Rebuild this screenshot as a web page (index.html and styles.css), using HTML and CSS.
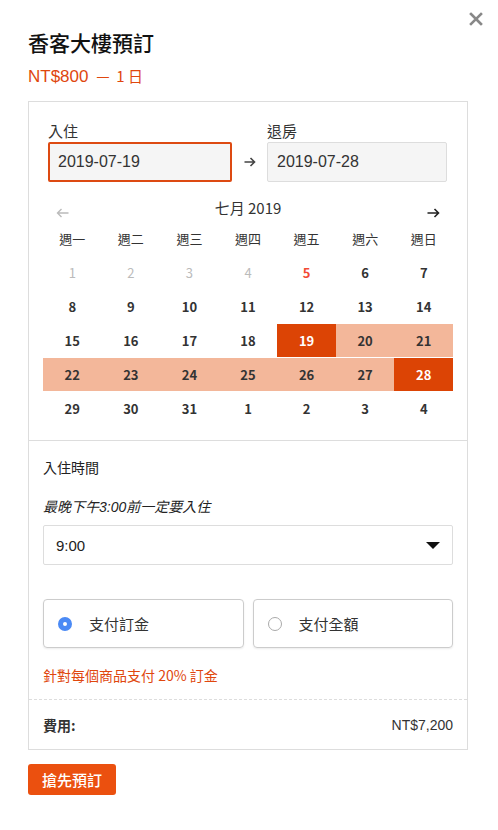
FILE: index.html
```html
<!DOCTYPE html>
<html>
    <head>
        <meta charset="utf-8">
        <title>香客大樓預訂</title>
        <link rel="stylesheet" href="styles.css">
    </head>
    <body>
        <div class="modal">
            <button class="close" aria-label="close">
                <svg width="14" height="14" viewBox="0 0 14 14"><path d="M2 2 L12 12 M12 2 L2 12" stroke="#888" stroke-width="2.6" stroke-linecap="square"/></svg>
            </button>
            <h2 class="title">香客大樓預訂</h2>
            <div class="price">NT$800 <span class="unit">— &nbsp;1 日</span></div>

            <div class="card">
                <div class="dates">
                    <div class="date-field">
                        <label>入住</label>
                        <div class="date-input active">2019-07-19</div>
                    </div>
                    <div class="date-arrow">
                        <svg width="12" height="10" viewBox="0 0 12 10"><path d="M0.5 5 H10.5 M6.5 1 L10.5 5 L6.5 9" fill="none" stroke="#444" stroke-width="1.6"/></svg>
                    </div>
                    <div class="date-field second">
                        <label>退房</label>
                        <div class="date-input">2019-07-28</div>
                    </div>
                </div>

                <div class="calendar">
                    <div class="month-nav">
                        <span class="nav prev"><svg width="13" height="10" viewBox="0 0 13 10"><path d="M12.5 5 H1.5 M5.5 1 L1.5 5 L5.5 9" fill="none" stroke="#bbb" stroke-width="1.4"/></svg></span>
                        <span class="month">七月 2019</span>
                        <span class="nav next"><svg width="13" height="10" viewBox="0 0 13 10"><path d="M0.5 5 H11.5 M7.5 1 L11.5 5 L7.5 9" fill="none" stroke="#222" stroke-width="1.6"/></svg></span>
                    </div>
                    <div class="days">
                        <div class="wd">週一</div>
                        <div class="wd">週二</div>
                        <div class="wd">週三</div>
                        <div class="wd">週四</div>
                        <div class="wd">週五</div>
                        <div class="wd">週六</div>
                        <div class="wd">週日</div>

                        <div class="day past">1</div>
                        <div class="day past">2</div>
                        <div class="day past">3</div>
                        <div class="day past">4</div>
                        <div class="day today">5</div>
                        <div class="day">6</div>
                        <div class="day">7</div>

                        <div class="day">8</div>
                        <div class="day">9</div>
                        <div class="day">10</div>
                        <div class="day">11</div>
                        <div class="day">12</div>
                        <div class="day">13</div>
                        <div class="day">14</div>

                        <div class="day">15</div>
                        <div class="day">16</div>
                        <div class="day">17</div>
                        <div class="day">18</div>
                        <div class="day selected">19</div>
                        <div class="day range">20</div>
                        <div class="day range">21</div>

                        <div class="day range">22</div>
                        <div class="day range">23</div>
                        <div class="day range">24</div>
                        <div class="day range">25</div>
                        <div class="day range">26</div>
                        <div class="day range">27</div>
                        <div class="day selected">28</div>

                        <div class="day">29</div>
                        <div class="day">30</div>
                        <div class="day">31</div>
                        <div class="day">1</div>
                        <div class="day">2</div>
                        <div class="day">3</div>
                        <div class="day">4</div>
                    </div>
                </div>

                <div class="checkin">
                    <h4>入住時間</h4>
                    <p class="note">最晚下午3:00前一定要入住</p>
                    <div class="select">
                        <span>9:00</span>
                        <span class="caret"></span>
                    </div>

                    <div class="pay-options">
                        <div class="pay-option">
                            <span class="radio checked"></span>
                            <span>支付訂金</span>
                        </div>
                        <div class="pay-option">
                            <span class="radio"></span>
                            <span>支付全額</span>
                        </div>
                    </div>
                    <p class="deposit">針對每個商品支付 20% 訂金</p>
                </div>

                <div class="total">
                    <span class="total-label">費用:</span>
                    <span class="total-value">NT$7,200</span>
                </div>
            </div>

            <button class="book">搶先預訂</button>
        </div>
    </body>
</html>
```

FILE: styles.css
```css
body {
    margin: 0;
    font-family: "Liberation Sans", "Noto Sans CJK TC", sans-serif;
    color: #222;
    background: #fff;
}

.modal {
    position: relative;
    padding: 26px 30px 0 28px;
    width: 440px;
}

.close {
    position: absolute;
    top: 12px;
    right: 15px;
    border: none;
    background: none;
    padding: 0;
    cursor: pointer;
}

.title {
    margin: 0;
    font-family: "Noto Sans CJK TC", sans-serif;
    font-size: 21px;
    font-weight: 500;
    line-height: 32px;
    color: #111;
}

.price {
    margin-top: 7px;
    font-size: 17px;
    line-height: 22px;
    color: #e0470e;
}

.price .unit {
    font-family: "Noto Sans CJK TC", sans-serif;
    font-size: 15px;
    margin-left: 3px;
}

.card {
    margin-top: 13px;
    border: 1px solid #ddd;
}

/* date inputs */
.dates {
    display: flex;
    align-items: flex-end;
    padding: 18px 20px 0 19px;
}

.date-field {
    width: 184px;
}

.date-field.second {
    width: 180px;
}

.date-field label {
    display: block;
    font-family: "Noto Sans CJK TC", sans-serif;
    font-size: 15px;
    line-height: 22px;
    color: #333;
}

.date-input {
    box-sizing: border-box;
    height: 40px;
    line-height: 38px;
    padding-left: 9px;
    font-size: 16px;
    color: #333;
    background: #f5f5f5;
    border: 1px solid #ddd;
    border-radius: 2px;
}

.date-input.active {
    border: 2px solid #dd4a12;
    padding-left: 8px;
    line-height: 36px;
}

.date-arrow {
    width: 35px;
    height: 40px;
    display: flex;
    align-items: center;
    justify-content: center;
}

/* calendar */
.calendar {
    padding: 0 14px 15px;
}

.month-nav {
    display: flex;
    justify-content: space-between;
    align-items: flex-start;
    height: 40px;
    padding: 0 13px;
}

.month {
    font-family: "Noto Sans CJK TC", sans-serif;
    font-size: 15px;
    line-height: 22px;
    color: #333;
    margin-top: 15px;
}

.nav {
    display: flex;
    margin-top: 26px;
}

.days {
    display: grid;
    grid-template-columns: repeat(7, 1fr);
    grid-auto-rows: 33px;
    row-gap: 1px;
    font-family: "Noto Sans CJK TC", sans-serif;
}

.wd, .day {
    display: flex;
    align-items: center;
    justify-content: center;
    font-size: 13px;
    color: #333;
}

.day {
    font-weight: 700;
}

.day.past {
    color: #bbb;
    font-weight: 400;
}

.day.today {
    color: #f24a35;
}

.day.range {
    background: #f3b79a;
}

.day.selected {
    background: #dc4405;
    color: #fff;
}

/* checkin time */
.checkin {
    border-top: 1px solid #ddd;
    padding: 15px 14px 0;
}

.checkin h4 {
    margin: 0;
    font-family: "Noto Sans CJK TC", sans-serif;
    font-size: 14px;
    font-weight: 400;
    line-height: 22px;
    color: #222;
}

.note {
    margin: 18px 0 0;
    font-size: 14px;
    font-style: italic;
    line-height: 22px;
    color: #222;
}

.select {
    box-sizing: border-box;
    height: 40px;
    margin-top: 7px;
    padding: 0 12px 0 12px;
    border: 1px solid #ddd;
    border-radius: 2px;
    display: flex;
    justify-content: space-between;
    align-items: center;
    font-size: 15px;
    color: #222;
}

.caret {
    width: 0;
    height: 0;
    border-left: 7px solid transparent;
    border-right: 7px solid transparent;
    border-top: 7px solid #111;
}

.pay-options {
    display: flex;
    gap: 9px;
    margin-top: 34px;
}

.pay-option {
    box-sizing: border-box;
    flex: 1;
    height: 49px;
    border: 1px solid #ccc;
    border-radius: 4px;
    box-shadow: 0 1px 2px rgba(0, 0, 0, 0.08);
    display: flex;
    align-items: center;
    padding-left: 14px;
    font-family: "Noto Sans CJK TC", sans-serif;
    font-size: 15px;
    color: #333;
}

.radio {
    box-sizing: border-box;
    width: 14px;
    height: 14px;
    border: 1px solid #aaa;
    border-radius: 50%;
    margin-right: 17px;
    background: #fff;
}

.radio.checked {
    border: 5px solid #4b8af5;
    background: #fff;
}

.deposit {
    margin: 16px 0 0;
    padding-bottom: 13px;
    font-family: "Noto Sans CJK TC", sans-serif;
    font-size: 14px;
    line-height: 22px;
    color: #e0470e;
}

.total {
    border-top: 1px dashed #ddd;
    display: flex;
    justify-content: space-between;
    align-items: center;
    height: 49px;
    padding: 0 14px;
    font-size: 14px;
    color: #333;
}

.total-label {
    font-family: "Noto Sans CJK TC", sans-serif;
    font-weight: 700;
}

.book {
    margin-top: 14px;
    height: 31px;
    width: 88px;
    border: none;
    border-radius: 3px;
    background: #eb500f;
    color: #fff;
    font-family: "Noto Sans CJK TC", sans-serif;
    font-size: 15px;
    font-weight: 500;
    cursor: pointer;
}
```
